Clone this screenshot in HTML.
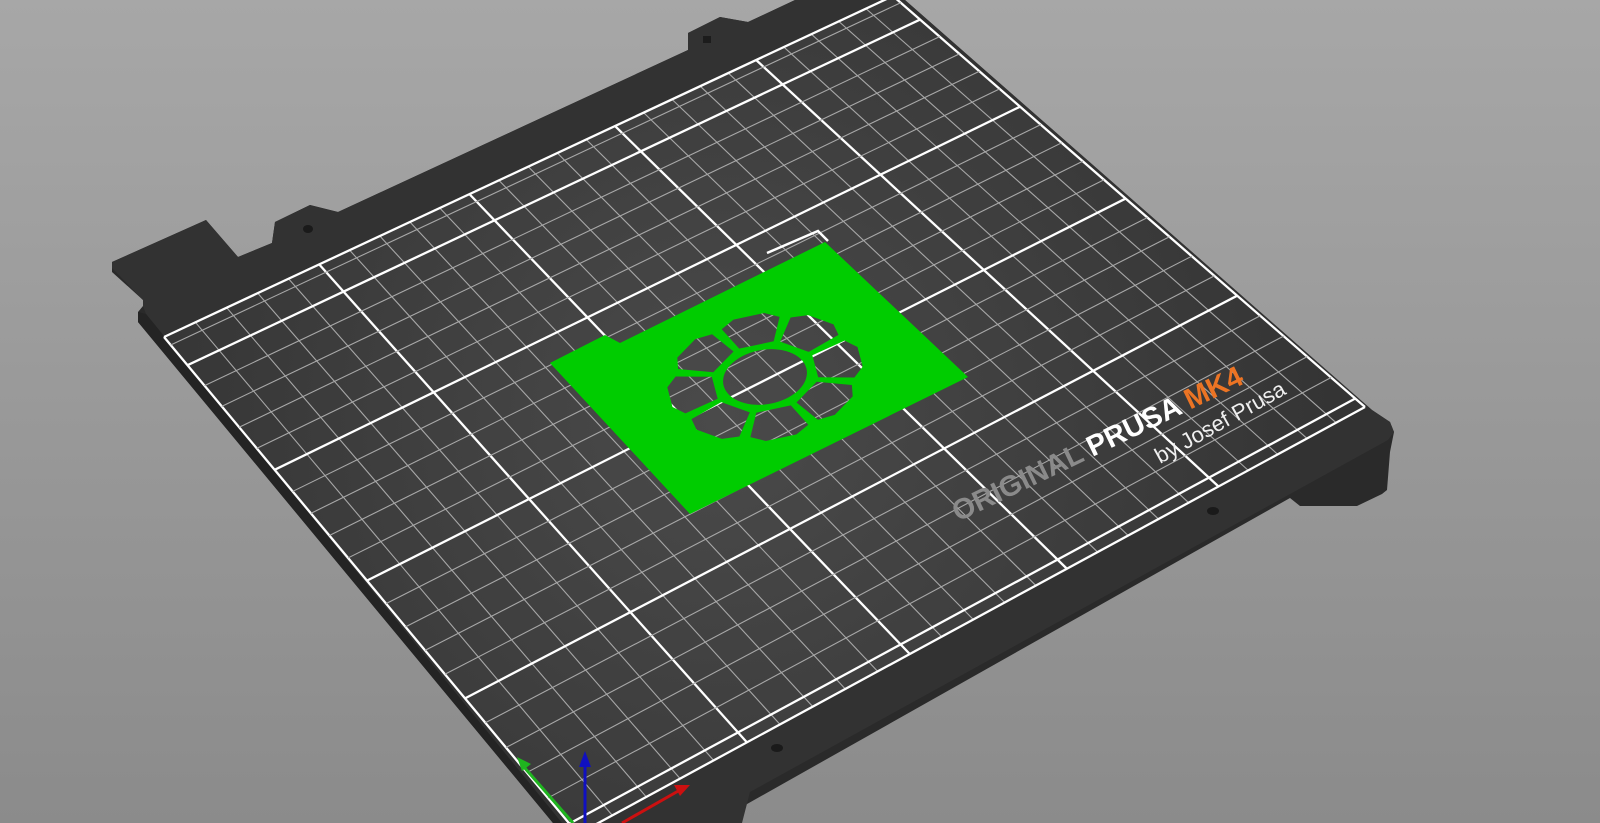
<!DOCTYPE html>
<html><head><meta charset="utf-8"><style>
html,body{margin:0;padding:0;width:1600px;height:823px;overflow:hidden;background:#999}
svg{display:block}
</style></head><body>
<svg id="s" width="1600" height="823" viewBox="0 0 1600 823" xmlns="http://www.w3.org/2000/svg">
<defs>
<linearGradient id="bg" x1="0" y1="0" x2="0" y2="1"><stop offset="0" stop-color="#a7a7a7"/><stop offset="1" stop-color="#8b8b8b"/></linearGradient>
<radialGradient id="gr" cx="720" cy="420" r="620" gradientUnits="userSpaceOnUse"><stop offset="0" stop-color="#4a4a4a"/><stop offset="1" stop-color="#343434"/></radialGradient>
<mask id="m" maskUnits="userSpaceOnUse" x="0" y="0" width="1600" height="823">
<rect x="0" y="0" width="1600" height="823" fill="#fff"/>
<g id="holes" fill="#000"></g>
</mask>
</defs>
<rect width="1600" height="823" fill="url(#bg)"/>
<polygon fill="#2a2a2a" points="112,262 206,220 238,257 272,243 275,222 310,205 338,212 688,50 688,33 720,17 748,22 795,0 905,0 1372,410 1390,422 1394,432 1390,452 1387,490 1382,494 1357,506 1300,506 1290,498 740,808 737,823 553,823 138,322 138,312 143,306 143,300 112,272"/>
<polygon fill="#323232" points="112,262 206,220 238,257 272,243 275,222 310,205 338,212 688,50 688,33 720,17 748,22 795,0 905,0 1372,410 1390,422 1394,432 1388,440 750,792 742,823 562,823 146,314 143,306 143,300 112,268"/>
<polygon fill="#242424" points="138,312 146,314 562,823 553,823 138,322"/>
<ellipse cx="1213" cy="511" rx="6" ry="4" fill="#1a1a1a"/>
<ellipse cx="777" cy="748" rx="6" ry="4" fill="#1a1a1a"/>
<ellipse cx="308" cy="229" rx="5" ry="4" fill="#1a1a1a"/>
<rect x="703" y="36" width="8" height="7" fill="#1c1c1c"/>
<polygon id="gq" fill="url(#gr)" points="164,337 893,-4 1365,407 578,834"/>
<g id="grid"></g>
<text transform="translate(958,522) rotate(-25.8)" font-family="Liberation Sans, sans-serif" font-weight="bold" font-size="29"><tspan fill="#8a8a8a">ORIGINAL </tspan><tspan fill="#ffffff">PRUSA </tspan><tspan fill="#ec7424">MK4</tspan></text>
<text transform="translate(1160,464) rotate(-29)" font-family="Liberation Sans, sans-serif" font-size="22" fill="#f0f0f0">by Josef Prusa</text>
<polyline points="767,253 818,231 828,241" fill="none" stroke="#fff" stroke-width="2.5"/>
<polygon points="550,363 605,335 620,343 825,242 968,377 690,514" fill="#00cc00" mask="url(#m)"/>
<g stroke-width="3" fill="none">
<line x1="573" y1="823" x2="523" y2="766" stroke="#1fb51f"/>
<line x1="585" y1="823" x2="585" y2="765" stroke="#1010c0"/>
<line x1="622" y1="823" x2="680" y2="790" stroke="#cc1010"/>
</g>
<polygon points="517,757 531,764 522,771" fill="#1fb51f"/>
<polygon points="585,751 579,767 591,767" fill="#1010c0"/>
<polygon points="690,785 674,785 680,796" fill="#cc1010"/>
</svg>
<script>
(function(){
var NS="http://www.w3.org/2000/svg";
var x0=578,y0=834,x1=1365,y1=407,x2=893,y2=-4,x3=164,y3=337;
var dx1=x1-x2,dx2=x3-x2,dx3=x0-x1+x2-x3,dy1=y1-y2,dy2=y3-y2,dy3=y0-y1+y2-y3;
var den=dx1*dy2-dy1*dx2;
var g=(dx3*dy2-dy3*dx2)/den,h=(dx1*dy3-dy1*dx3)/den;
var a=x1-x0+g*x1,b=x3-x0+h*x3,c=x0,d=y1-y0+g*y1,e=y3-y0+h*y3,f=y0;
function P(u,v){var w=g*u+h*v+1;return [(a*u+b*v+c)/w,(d*u+e*v+f)/w];}
var G=document.getElementById("grid");
function L(p,q,maj){var l=document.createElementNS(NS,"line");
l.setAttribute("x1",p[0]);l.setAttribute("y1",p[1]);l.setAttribute("x2",q[0]);l.setAttribute("y2",q[1]);
l.setAttribute("stroke",maj?"#ffffff":"#a8a8a8");l.setAttribute("stroke-width",maj?2.3:1.1);G.appendChild(l);}
var Y0=-4,Y1=214;
function v(y){return (y-Y0)/(Y1-Y0);}
for(var x=0;x<=250;x+=10){var u=x/250;L(P(u,0),P(u,1),x%50==0);}
for(var y=0;y<=210;y+=10){L(P(0,v(y)),P(1,v(y)),y%50==0);}
L(P(0,0),P(1,0),true);L(P(0,1),P(1,1),true);
var H=document.getElementById("holes");
function M(px,py){return [765+47*px+8*py,377-10*px+30*py];}
var el=document.createElementNS(NS,"ellipse");
el.setAttribute("cx",0);el.setAttribute("cy",0);el.setAttribute("rx",0.88);el.setAttribute("ry",0.88);
el.setAttribute("transform","matrix(47,-10,8,30,765,377)");H.appendChild(el);
for(var i=0;i<8;i++){
 var t=i*Math.PI/4-Math.PI/2;var pts=[];
 var spec=[[1.13,-0.33],[1.9,-0.33],[2.05,-0.16],[2.05,0.16],[1.9,0.33],[1.13,0.33]];
 spec.forEach(function(s){var ang=t+s[1];var p=M(s[0]*Math.cos(ang),s[0]*Math.sin(ang));pts.push(p[0].toFixed(1)+","+p[1].toFixed(1));});
 var pg=document.createElementNS(NS,"polygon");pg.setAttribute("points",pts.join(" "));H.appendChild(pg);
}
})();
</script>
</body></html>
